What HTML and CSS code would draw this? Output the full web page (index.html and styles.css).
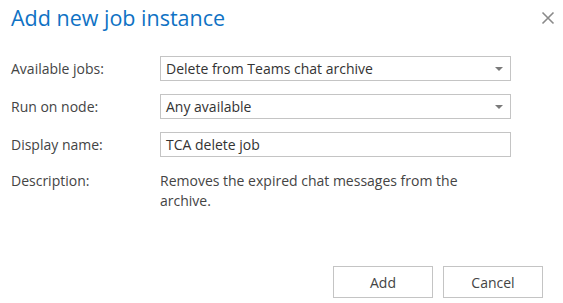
FILE: index.html
```html
<!DOCTYPE html>
<html>
    <head>
        <meta charset="utf-8">
        <link rel="stylesheet" href="styles.css">
    </head>
<body>
    <div class="dialog">
        <div class="header">
            <h1 class="title">Add new job instance</h1>
            <button class="closeBtn" aria-label="close">
                <svg width="14" height="14" viewBox="0 0 14 14">
                    <path d="M1.5 1.5 L12.5 12.5 M12.5 1.5 L1.5 12.5" stroke="#8a8a8a" stroke-width="1.6" fill="none"/>
                </svg>
            </button>
        </div>

        <div class="form">
            <div class="row">
                <span class="label">Available jobs:</span>
                <div class="field select">
                    <span>Delete from Teams chat archive</span>
                    <span class="arrow"></span>
                </div>
            </div>
            <div class="row">
                <span class="label">Run on node:</span>
                <div class="field select">
                    <span>Any available</span>
                    <span class="arrow"></span>
                </div>
            </div>
            <div class="row">
                <span class="label">Display name:</span>
                <div class="field">
                    <span>TCA delete job</span>
                </div>
            </div>
            <div class="row descRow">
                <span class="label">Description:</span>
                <p class="desc">Removes the expired chat messages from the archive.</p>
            </div>
        </div>

        <div class="buttons">
            <button class="btn">Add</button>
            <button class="btn">Cancel</button>
        </div>
    </div>
</body>
</html>
```

FILE: styles.css
```css
body {
    margin: 0;
    background: #fff;
    font-family: "Open Sans", "Noto Sans", sans-serif;
    color: #444;
}

.dialog {
    width: 563px;
    height: 303px;
    display: flex;
    flex-direction: column;
    box-sizing: border-box;
    padding: 2px 20px 5px 11px;
}

.header {
    display: flex;
    justify-content: space-between;
    align-items: flex-start;
}

.title {
    margin: 0;
    font-size: 21.5px;
    font-weight: normal;
    line-height: 32px;
    color: #0f72c4;
}

.closeBtn {
    border: none;
    background: none;
    padding: 0;
    margin: 9px -12px 0 0;
    width: 14px;
    height: 14px;
    display: flex;
}

.form {
    margin-top: 22px;
    display: flex;
    flex-direction: column;
    gap: 13px;
}

.row {
    display: flex;
    align-items: center;
}

.label {
    width: 149px;
    font-size: 14px;
    flex-shrink: 0;
}

.field {
    width: 351px;
    height: 25px;
    box-sizing: border-box;
    border: 1px solid #c4c4c4;
    display: flex;
    align-items: center;
    justify-content: space-between;
    padding: 0 7px 0 5px;
    font-size: 14px;
    color: #333;
}

.arrow {
    width: 0;
    height: 0;
    border-left: 4px solid transparent;
    border-right: 4px solid transparent;
    border-top: 4px solid #7a7a7a;
}

.descRow {
    align-items: flex-start;
    margin-top: 1px;
}

.desc {
    margin: 0;
    width: 320px;
    font-size: 14px;
    line-height: 20px;
}

.buttons {
    margin-top: auto;
    display: flex;
    justify-content: flex-end;
    gap: 10px;
}

.btn {
    width: 100px;
    height: 32px;
    background: #fff;
    border: 1px solid #c4c4c4;
    font-family: inherit;
    font-size: 14px;
    color: #444;
}
```
